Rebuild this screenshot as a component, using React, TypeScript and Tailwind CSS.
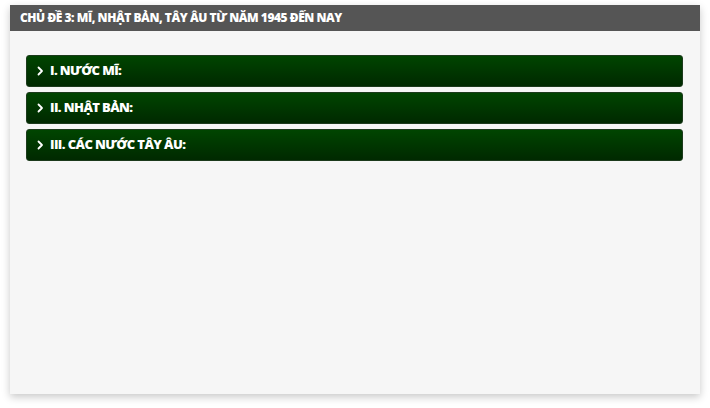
import React from 'react';

const sections = ['I. NƯỚC MĨ:', 'II. NHẬT BẢN:', 'III. CÁC NƯỚC TÂY ÂU:'];

const Chevron: React.FC = () => (
  <svg width="7" height="10" viewBox="0 0 7 10" fill="none" className="shrink-0">
    <path d="M1.5 1.5 L5 5 L1.5 8.5" stroke="white" strokeWidth="1.8" strokeLinecap="round" strokeLinejoin="round" />
  </svg>
);

export default function App() {
  return (
    <div className="w-[710px] h-[408px] bg-white pt-[5px] px-[10px]" style={{ fontFamily: '"Open Sans", "Noto Sans", sans-serif' }}>
      <div className="h-[389px] bg-[#f6f6f6] shadow-[0_3px_8px_rgba(0,0,0,0.22)] flex flex-col">
        {/* Title bar */}
        <div className="h-[26px] bg-[#555555] flex items-center px-[10px]">
          <span className="text-white text-[12px] font-extrabold tracking-[-0.45px]">CHỦ ĐỀ 3: MĨ, NHẬT BẢN, TÂY ÂU TỪ NĂM 1945 ĐẾN NAY</span>
        </div>

        {/* Accordion list */}
        <div className="flex flex-col gap-[5px] pt-[24px] pl-[16px] pr-[17px]">
          {sections.map((s) => (
            <div
              key={s}
              className="h-[32px] rounded-[3px] border border-[#1c3a1c] bg-gradient-to-b from-[#004500] to-[#002900] flex items-center gap-[6px] pl-[10px] cursor-pointer"
            >
              <Chevron />
              <span className="text-white text-[13px] font-extrabold tracking-[-0.6px]">{s}</span>
            </div>
          ))}
        </div>
      </div>
    </div>
  );
}
